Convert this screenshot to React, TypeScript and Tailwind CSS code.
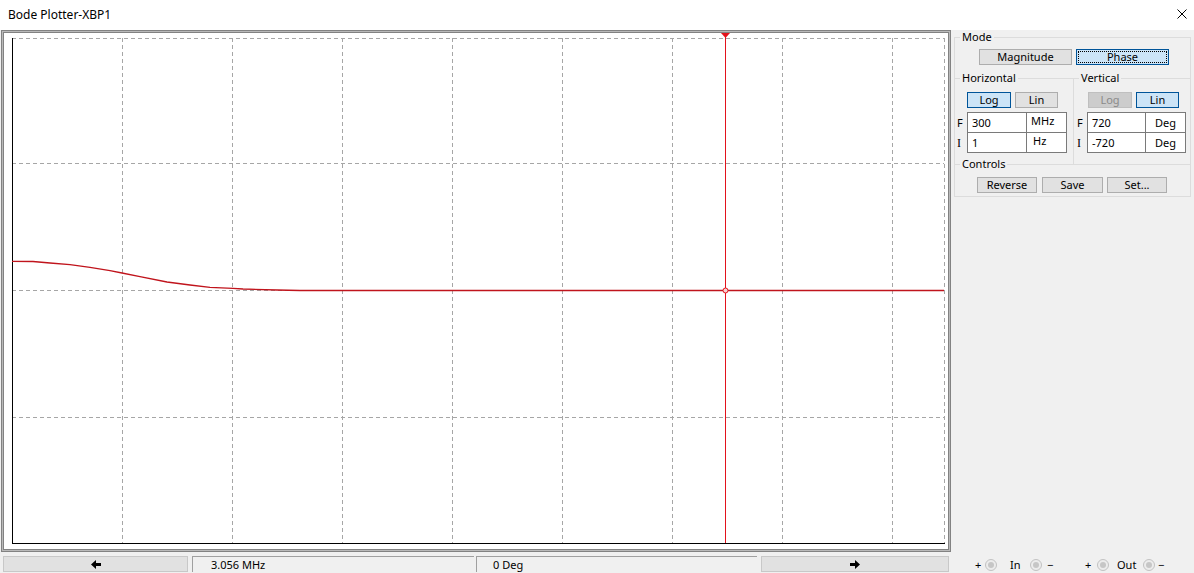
import React from "react";

const gridV = [118, 228, 338, 448, 558, 668, 778, 888];
const gridH = [130.5, 257.5, 384.5];
const curve: [number, number][] = [
  [8, 228.3], [29, 228.5], [46, 230], [66, 231.7], [86, 234.3], [106, 237.7],
  [118, 240], [136, 243.7], [163, 249], [186, 252], [206, 254.3], [229, 255.3],
  [239, 256], [273, 257], [296, 257.5], [940, 257.5],
];

function Plot() {
  const grid = "#a6a6a6";
  const cur = "#e3121c";
  return (
    <svg width="944" height="516" viewBox="0 0 944 516" className="block">
      {gridV.map((x) => (
        <line key={x} x1={x + 0.5} y1={5} x2={x + 0.5} y2={510} stroke={grid} strokeDasharray="4 3" shapeRendering="crispEdges" />
      ))}
      {gridH.map((y) => (
        <line key={y} x1={8} y1={y} x2={940} y2={y} stroke={grid} strokeDasharray="4 3" shapeRendering="crispEdges" />
      ))}
      <line x1={8} y1={5.5} x2={941} y2={5.5} stroke={grid} strokeDasharray="4 3" shapeRendering="crispEdges" />
      <line x1={940.5} y1={5} x2={940.5} y2={510} stroke={grid} strokeDasharray="4 3" shapeRendering="crispEdges" />
      <line x1={8.5} y1={5} x2={8.5} y2={511} stroke="#000" shapeRendering="crispEdges" />
      <line x1={8} y1={510.5} x2={941} y2={510.5} stroke="#000" shapeRendering="crispEdges" />
      <polyline points={curve.map((p) => p.join(",")).join(" ")} fill="none" stroke="#c0141c" strokeWidth={1.3} />
      <rect x={721} y={0} width={1} height={510} fill={cur} />
      <polygon points="717,0 726,0 721.5,5" fill={cur} />
      <circle cx={721.5} cy={257.5} r={2.5} fill="#f6d0d0" stroke={cur} strokeWidth={1} />
    </svg>
  );
}

function Arrow({ dir }: { dir: "left" | "right" }) {
  return (
    <svg width="10" height="9" viewBox="0 0 10 9" style={{ transform: dir === "right" ? "scaleX(-1)" : undefined }}>
      <polygon points="0,4.5 5,0 5,3 10,3 10,6 5,6 5,9" fill="#000" />
    </svg>
  );
}

function Radio() {
  return (
    <span className="w-[12px] h-[12px] rounded-full border border-[#c2c2c2] bg-[#ececec] flex items-center justify-center shrink-0">
      <span className="w-[6px] h-[6px] rounded-full bg-[#c6c6c6]" />
    </span>
  );
}

export default function App() {
  return (
    <div className="w-[1194px] h-[573px] overflow-hidden bg-[#f0f0f0] font-['Noto_Sans',sans-serif] text-[11px] text-black leading-[14px]">
      {/* Title bar */}
      <div className="h-[30px] bg-white flex items-center justify-between pl-[8px] pr-[7px]">
        <span className="text-[12px]">Bode Plotter-XBP1</span>
        <svg width="10" height="10" viewBox="0 0 10 10" className="-mt-[2px]">
          <path d="M0.5 0.5 L9.5 9.5 M9.5 0.5 L0.5 9.5" stroke="#000" strokeWidth="1" fill="none" />
        </svg>
      </div>

      <div className="flex h-[543px]">
        {/* Left column */}
        <div className="w-[953px] flex flex-col">
          <div className="ml-[1px] w-[950px] h-[522px] border border-[#828282] bg-[#b9b9b9] p-px">
            <div className="h-full border border-[#828282] bg-white">
              <Plot />
            </div>
          </div>
          <div className="mt-[4px] h-[16px] flex">
            <div className="ml-[3px] w-[185px] h-full bg-[#e1e1e1] border border-[#c8c8c8] flex items-center justify-center">
              <Arrow dir="left" />
            </div>
            <div className="ml-[4px] w-[282px] h-full border-t border-l border-[#a0a0a0] pl-[18px] flex items-center">
              3.056 MHz
            </div>
            <div className="ml-[2px] w-[281px] h-full border-t border-l border-[#a0a0a0] pl-[16px] flex items-center">
              0 Deg
            </div>
            <div className="ml-[4px] w-[188px] h-full bg-[#e1e1e1] border border-[#c8c8c8] flex items-center justify-center">
              <Arrow dir="right" />
            </div>
          </div>
        </div>

        {/* Right column */}
        <div className="w-[241px] flex flex-col">
          <fieldset className="ml-[1px] w-[237px] border border-[#dcdcdc] pb-[3px]">
            <legend className="ml-[5px] px-[2px] leading-[14px]">Mode</legend>
            <div className="mt-[5px] pl-[24px] flex gap-[4px]">
              <div className="w-[93px] h-[16px] bg-[#e1e1e1] border border-[#adadad] flex items-center justify-center">Magnitude</div>
              <div className="w-[93px] h-[16px] bg-[#cce4f7] border border-[#005499] p-[1px] flex">
                <span className="flex-1 border border-dotted border-black flex items-center justify-center">Phase</span>
              </div>
            </div>

            <div className="mt-[6px] flex">
              <fieldset className="w-[119px] h-[93px] border-t border-r border-[#dcdcdc]">
                <legend className="ml-[5px] px-[2px] leading-[14px]">Horizontal</legend>
                <div className="mt-[7px] pl-[12px] flex gap-[4px]">
                  <div className="w-[44px] h-[16px] bg-[#cce4f7] border border-[#005499] flex items-center justify-center">Log</div>
                  <div className="w-[43px] h-[16px] bg-[#e1e1e1] border border-[#adadad] flex items-center justify-center">Lin</div>
                </div>
                <div className="mt-[4px] flex h-[21px]">
                  <span className="w-[12px] pl-[2px] flex items-center">F</span>
                  <div className="w-[60px] h-full bg-white border border-[#7a7a7a] pl-[4px] flex items-center">300</div>
                  <div className="w-[40px] h-full bg-white border-y border-r border-[#7a7a7a] pl-[4px] flex items-start pt-[1px]">MHz</div>
                </div>
                <div className="-mt-px flex h-[21px]">
                  <span className="w-[12px] pl-[2px] flex items-center font-['Liberation_Serif',serif] text-[12px]">I</span>
                  <div className="w-[60px] h-full bg-white border border-[#7a7a7a] pl-[4px] flex items-center">1</div>
                  <div className="w-[40px] h-full bg-white border-y border-r border-[#7a7a7a] pl-[6px] flex items-start pt-[1px]">Hz</div>
                </div>
              </fieldset>
              <fieldset className="flex-1 h-[93px] border-t border-[#dcdcdc]">
                <legend className="ml-[5px] px-[2px] leading-[14px]">Vertical</legend>
                <div className="mt-[7px] pl-[14px] flex gap-[4px]">
                  <div className="w-[44px] h-[16px] bg-[#cccccc] border border-[#bfbfbf] text-[#8a8a8a] flex items-center justify-center">Log</div>
                  <div className="w-[43px] h-[16px] bg-[#cce4f7] border border-[#005499] flex items-center justify-center">Lin</div>
                </div>
                <div className="mt-[4px] flex h-[21px]">
                  <span className="w-[13px] pl-[3px] flex items-center">F</span>
                  <div className="w-[59px] h-full bg-white border border-[#7a7a7a] pl-[4px] flex items-center">720</div>
                  <div className="w-[40px] h-full bg-white border-y border-r border-[#7a7a7a] flex items-center justify-center">Deg</div>
                </div>
                <div className="-mt-px flex h-[21px]">
                  <span className="w-[13px] pl-[3px] flex items-center font-['Liberation_Serif',serif] text-[12px]">I</span>
                  <div className="w-[59px] h-full bg-white border border-[#7a7a7a] pl-[4px] flex items-center">-720</div>
                  <div className="w-[40px] h-full bg-white border-y border-r border-[#7a7a7a] flex items-center justify-center">Deg</div>
                </div>
              </fieldset>
            </div>

            <fieldset className="-mt-[7px] border-t border-[#dcdcdc]">
              <legend className="ml-[5px] px-[2px] leading-[14px]">Controls</legend>
              <div className="mt-[6px] pl-[22px] flex">
                <div className="w-[60px] h-[16px] bg-[#e1e1e1] border border-[#adadad] flex items-center justify-center">Reverse</div>
                <div className="ml-[5px] w-[61px] h-[16px] bg-[#e1e1e1] border border-[#adadad] flex items-center justify-center">Save</div>
                <div className="ml-[4px] w-[60px] h-[16px] bg-[#e1e1e1] border border-[#adadad] flex items-center justify-center">Set...</div>
              </div>
            </fieldset>
          </fieldset>

          <div className="mt-auto h-[17px] flex items-center pl-[22px] whitespace-nowrap">
            <span className="w-[6px] text-center">+</span>
            <span className="ml-[4px]"><Radio /></span>
            <span className="ml-[13px] w-[10px]">In</span>
            <span className="ml-[10px]"><Radio /></span>
            <span className="ml-[5px] w-[6px] text-center">−</span>
            <span className="ml-[32px] w-[6px] text-center">+</span>
            <span className="ml-[6px]"><Radio /></span>
            <span className="ml-[8px] w-[20px]">Out</span>
            <span className="ml-[6px]"><Radio /></span>
            <span className="ml-[3px] w-[6px] text-center">−</span>
          </div>
        </div>
      </div>
    </div>
  );
}
